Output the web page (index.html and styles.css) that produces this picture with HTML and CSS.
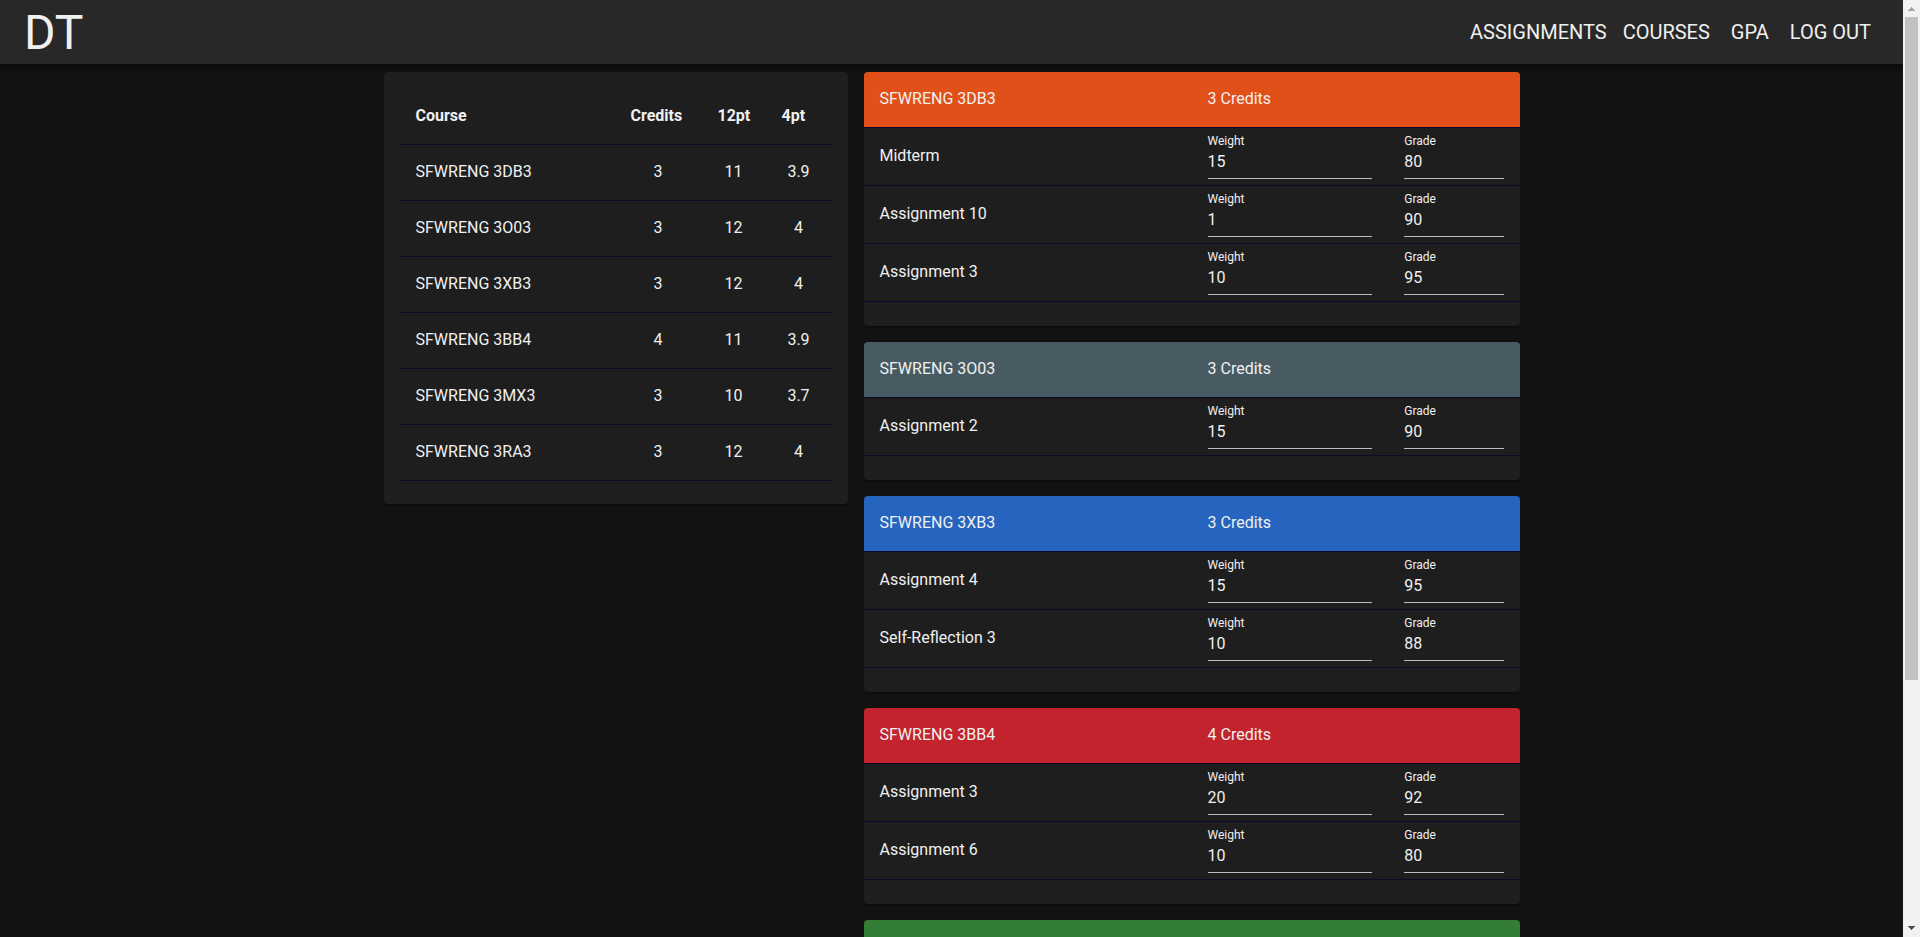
FILE: index.html
```html
<!DOCTYPE html>
<html lang="en">
<head>
<meta charset="utf-8">
<title>DT</title>
<link rel="stylesheet" href="styles.css">
</head>
<body>
<div class="window">
  <div class="page">
    <header class="navbar">
      <h1 class="brand">DT</h1>
      <nav class="nav">
        <a class="nav-link" href="#assignments">ASSIGNMENTS</a>
        <a class="nav-link" href="#courses">COURSES</a>
        <a class="nav-link" href="#gpa">GPA</a>
        <a class="nav-link" href="#logout">LOG OUT</a>
      </nav>
    </header>
    <main class="content">
      <section class="card summary">
        <table class="summary-table">
          <colgroup><col><col class="col-credits"><col class="col-twelve"><col class="col-four"></colgroup>
          <thead>
            <tr><th>Course</th><th>Credits</th><th>12pt</th><th>4pt</th></tr>
          </thead>
          <tbody>
            <tr><td>SFWRENG 3DB3</td><td>3</td><td>11</td><td>3.9</td></tr>
            <tr><td>SFWRENG 3O03</td><td>3</td><td>12</td><td>4</td></tr>
            <tr><td>SFWRENG 3XB3</td><td>3</td><td>12</td><td>4</td></tr>
            <tr><td>SFWRENG 3BB4</td><td>4</td><td>11</td><td>3.9</td></tr>
            <tr><td>SFWRENG 3MX3</td><td>3</td><td>10</td><td>3.7</td></tr>
            <tr><td>SFWRENG 3RA3</td><td>3</td><td>12</td><td>4</td></tr>
          </tbody>
        </table>
      </section>
      <div class="courses">
        <section class="card course">
          <table class="course-table">
            <thead class="orange"><tr><th class="c-name">SFWRENG 3DB3</th><th class="c-weight">3 Credits</th><th class="c-grade"></th></tr></thead>
            <tbody>
              <tr><td>Midterm</td>
                <td class="cell"><label for="w1">Weight</label><input id="w1" value="15"></td>
                <td class="cell"><label for="g1">Grade</label><input id="g1" value="80"></td></tr>
              <tr><td>Assignment 10</td>
                <td class="cell"><label for="w2">Weight</label><input id="w2" value="1"></td>
                <td class="cell"><label for="g2">Grade</label><input id="g2" value="90"></td></tr>
              <tr><td>Assignment 3</td>
                <td class="cell"><label for="w3">Weight</label><input id="w3" value="10"></td>
                <td class="cell"><label for="g3">Grade</label><input id="g3" value="95"></td></tr>
            </tbody>
          </table>
        </section>
        <section class="card course">
          <table class="course-table">
            <thead class="slate"><tr><th class="c-name">SFWRENG 3O03</th><th class="c-weight">3 Credits</th><th class="c-grade"></th></tr></thead>
            <tbody>
              <tr><td>Assignment 2</td>
                <td class="cell"><label for="w4">Weight</label><input id="w4" value="15"></td>
                <td class="cell"><label for="g4">Grade</label><input id="g4" value="90"></td></tr>
            </tbody>
          </table>
        </section>
        <section class="card course">
          <table class="course-table">
            <thead class="blue"><tr><th class="c-name">SFWRENG 3XB3</th><th class="c-weight">3 Credits</th><th class="c-grade"></th></tr></thead>
            <tbody>
              <tr><td>Assignment 4</td>
                <td class="cell"><label for="w5">Weight</label><input id="w5" value="15"></td>
                <td class="cell"><label for="g5">Grade</label><input id="g5" value="95"></td></tr>
              <tr><td>Self-Reflection 3</td>
                <td class="cell"><label for="w6">Weight</label><input id="w6" value="10"></td>
                <td class="cell"><label for="g6">Grade</label><input id="g6" value="88"></td></tr>
            </tbody>
          </table>
        </section>
        <section class="card course">
          <table class="course-table">
            <thead class="red"><tr><th class="c-name">SFWRENG 3BB4</th><th class="c-weight">4 Credits</th><th class="c-grade"></th></tr></thead>
            <tbody>
              <tr><td>Assignment 3</td>
                <td class="cell"><label for="w7">Weight</label><input id="w7" value="20"></td>
                <td class="cell"><label for="g7">Grade</label><input id="g7" value="92"></td></tr>
              <tr><td>Assignment 6</td>
                <td class="cell"><label for="w8">Weight</label><input id="w8" value="10"></td>
                <td class="cell"><label for="g8">Grade</label><input id="g8" value="80"></td></tr>
            </tbody>
          </table>
        </section>
        <section class="card course">
          <table class="course-table">
            <thead class="green"><tr><th class="c-name"></th><th class="c-weight"></th><th class="c-grade"></th></tr></thead>
          </table>
        </section>
      </div>
    </main>
  </div>
  <div class="scrollbar" aria-hidden="true">
    <svg class="arrow" viewBox="0 0 17 17" shape-rendering="crispEdges"><path fill="#a3a3a3" d="M8 7h1v1h1v1h1v1h1v1H5v-1h1V9h1V8h1z"/></svg>
    <div class="track"><div class="thumb"></div></div>
    <svg class="arrow" viewBox="0 0 17 17" shape-rendering="crispEdges"><path fill="#505050" d="M5 6h7v1h-1v1h-1v1H9v1H8V9H7V8H6V7H5z"/></svg>
  </div>
</div>
</body>
</html>
```

FILE: styles.css
```css
* {
  box-sizing: border-box;
}

body {
  margin: 0;
  background: #121212;
  color: #f0f0f0;
  font: 400 16px/20px Roboto, sans-serif;
}

.window {
  display: flex;
  height: 100vh;
  overflow: hidden;
}

.page {
  flex: 1;
  min-width: 0;
  overflow: hidden;
}

.navbar {
  display: flex;
  align-items: center;
  justify-content: space-between;
  height: 64px;
  padding: 0 24px;
  background: #282828;
  box-shadow: 0 2px 4px -1px rgba(0, 0, 0, 0.2), 0 4px 5px rgba(0, 0, 0, 0.14), 0 1px 10px rgba(0, 0, 0, 0.12);
}

.brand {
  margin: 0;
  padding-top: 2px;
  font-size: 48px;
  line-height: 56px;
  font-weight: 400;
}

.nav {
  display: flex;
}

.nav-link {
  min-width: 64px;
  padding: 6px 8px;
  color: inherit;
  font-size: 20px;
  line-height: 24px;
  text-align: center;
  text-decoration: none;
}

.content {
  display: grid;
  grid-template-columns: 464fr 656fr;
  align-items: start;
  gap: 16px;
  max-width: 1136px;
  margin: 0 auto;
  padding-top: 8px;
}

.card {
  overflow: hidden;
  border-radius: 4px;
  background: #1e1e1e;
  box-shadow: 0 2px 1px -1px rgba(0, 0, 0, 0.2), 0 1px 1px rgba(0, 0, 0, 0.14), 0 1px 3px rgba(0, 0, 0, 0.12);
}

.summary {
  padding: 16px 16px 23px;
}

.summary-table,
.course-table {
  width: 100%;
  table-layout: fixed;
  border-spacing: 0;
}

th,
td {
  height: 56px;
  padding: 0 16px 2px;
  border-bottom: 1px solid #0a0a2c;
  text-align: left;
}

.summary-table th {
  height: 57px;
  padding-bottom: 0;
}

.summary-table td + td {
  text-align: center;
}

.col-credits {
  width: 87px;
}

.col-twelve {
  width: 64px;
}

.col-four {
  width: 66px;
}

.courses {
  display: flex;
  flex-direction: column;
  gap: 16px;
}

.course {
  padding-bottom: 24px;
}

.course-table th {
  font-weight: 400;
}

.course-table td {
  height: 58px;
}

.c-name {
  width: 50%;
}

.c-weight {
  width: 30%;
}

.c-grade {
  width: 20%;
}

.course-table .cell {
  padding: 6px 16px;
}

label {
  display: block;
  font-size: 12px;
  line-height: 14px;
}

input {
  display: block;
  width: 100%;
  height: 31px;
  padding: 0 0 4px;
  border: 0;
  border-bottom: 1px solid #bcbcbc;
  background: none;
  color: inherit;
  font: inherit;
}

.orange {
  background: #e25019;
}

.slate {
  background: #485b63;
}

.blue {
  background: #2565bf;
}

.red {
  background: #c2232c;
}

.green {
  background: #337e34;
}

.scrollbar {
  display: flex;
  flex-direction: column;
  width: 17px;
  background: #f1f1f1;
}

.arrow {
  width: 17px;
  height: 17px;
}

.track {
  flex: 1;
  padding: 0 2px;
}

.thumb {
  height: 73.4%;
  background: #c1c1c1;
}
```
